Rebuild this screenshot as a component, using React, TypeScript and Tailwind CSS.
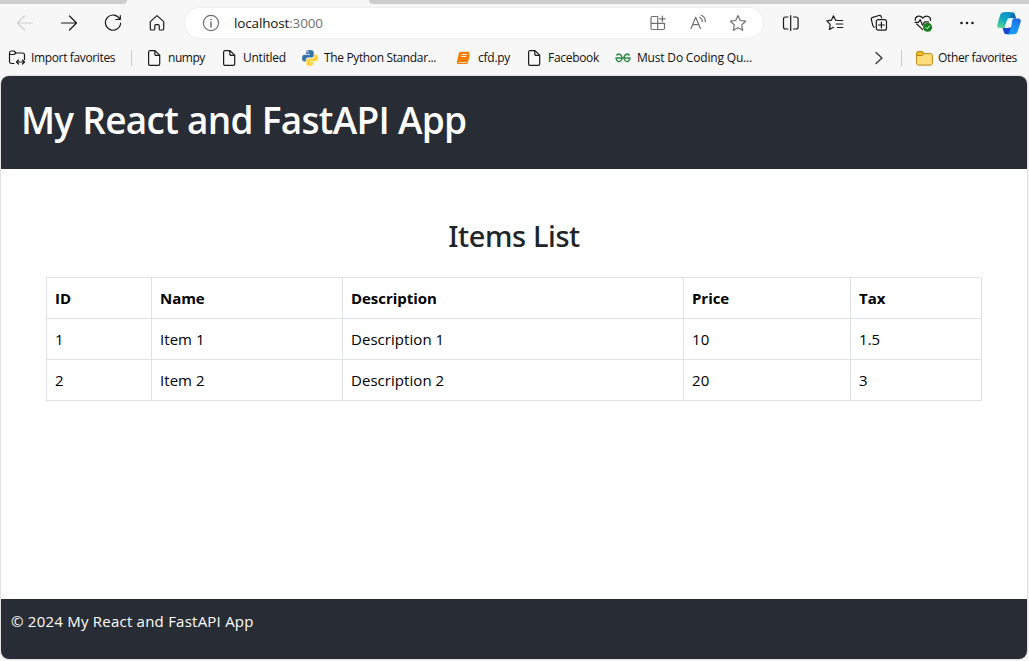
import type { ReactNode } from 'react';

type IconProps = { children: ReactNode; className?: string; size?: number };

function Icon({ children, className = '', size = 20 }: IconProps) {
  return (
    <svg
      width={size}
      height={size}
      viewBox={`0 0 ${size} ${size}`}
      fill="none"
      stroke="currentColor"
      strokeWidth="1.2"
      strokeLinecap="round"
      strokeLinejoin="round"
      className={`shrink-0 ${className}`}
    >
      {children}
    </svg>
  );
}

function ToolButton({ children, label }: { children: ReactNode; label: string }) {
  return (
    <button aria-label={label} className="flex h-[30px] w-11 shrink-0 items-center justify-center">
      {children}
    </button>
  );
}

function PageIcon() {
  return (
    <svg width="14" height="16" viewBox="0 0 14 16" fill="none" stroke="#1b1b1b" strokeWidth="1.2" strokeLinejoin="round" className="shrink-0">
      <path d="M3 .7H8l4.700 4.400v8.800c0 .8-.6 1.400-1.400 1.400H3c-.8 0-1.400-.6-1.400-1.400V2.100C1.600 1.300 2.200.7 3 .7Z" />
      <path d="M7.800.9v3.200c0 .8.5 1.300 1.300 1.300h3.400" />
    </svg>
  );
}

function PythonIcon() {
  return (
    <svg width="16" height="16" viewBox="0 0 16 16" className="shrink-0">
      <path fill="#3775a9" d="M7.900 0C5.500 0 4.200.7 4.200 2.200V4H8v.7H2.500C.9 4.700 0 6 0 8s.8 3.600 2.300 3.600h1.500V9.700c0-1.300 1.100-2.300 2.300-2.300h3.700c1.100 0 1.900-.9 1.900-2V2.200C11.700.8 10.200 0 7.900 0Z" />
      <path fill="#ffd43b" d="M8.200 16c2.300 0 3.600-.7 3.600-2.200V12H8v-.7h5.500c1.600 0 2.500-1.300 2.500-3.300s-.8-3.600-2.300-3.600h-1.300v1.900c0 1.300-1.100 2.300-2.300 2.300H6.400c-1.200 0-2.100.9-2.100 2v3.200c0 1.400 1.500 2.200 3.900 2.200Z" />
      <circle cx="6" cy="2" r=".8" fill="#f6f6f6" />
      <circle cx="10" cy="14" r=".8" fill="#f6f6f6" />
    </svg>
  );
}

function BookIcon() {
  return (
    <svg width="14" height="14" viewBox="0 0 14 14" className="shrink-0">
      <path fill="#f57c00" d="M4.300.8h7.900c.8 0 1.200.6 1 1.300L11.300 9.800c-.2.700-.7 1.100-1.400 1.100H3c-.8 0-.8.9-.1.900h7.600l2.600-8.500c.6.2.9.600.7 1.200l-2 7.200c-.2.800-.8 1.300-1.600 1.300H2.600c-1.300 0-2-.9-1.700-2.100L3 2C3.200 1.200 3.700.8 4.300.8Z" />
      <path stroke="#fff" strokeWidth=".9" d="M5.700 3.500h5M5.200 5.500h5" />
    </svg>
  );
}

function GeeksIcon() {
  return (
    <svg width="16" height="10" viewBox="0 0 16 10" fill="none" stroke="#2f8d46" strokeWidth="1.500" className="shrink-0">
      <path d="M1.500 2.500C2.400 1.200 4 .9 5.300 1.700 7.400 3 7.500 6.500 5.500 8 3.500 9.400 1.200 8.100 1.100 5.100h13.800C14.800 8.100 12.500 9.400 10.500 8c-2-1.500-1.900-5 .2-6.300 1.300-.8 2.900-.5 3.800.8" />
    </svg>
  );
}

function FolderIcon() {
  return (
    <svg width="17" height="15" viewBox="0 0 17 15" fill="none" stroke="#b8860b" className="shrink-0">
      <path fill="#ffdc7c" d="M.6 3v9.200c0 1.100.8 1.900 1.900 1.900h12c1.100 0 1.900-.8 1.900-1.900V4.500c0-1.100-.8-1.900-1.900-1.900H8.200L6.700 1C6.400.7 6.100.6 5.700.6H2.500C1.300.6.6 1.500.6 3Z" />
      <path fill="#f2b928" d="M.6 4.500V2.500C.6 1.400 1.300.6 2.500.6h3.200c.4 0 .7.1 1 .4l1.500 1.600-1.400 1.500c-.3.300-.6.400-1 .4Z" />
    </svg>
  );
}

function CopilotIcon() {
  return (
    <svg width="24" height="23" viewBox="0 0 24 23" className="shrink-0">
      <defs>
        <linearGradient id="copilot-left" x1="9" y1="0" x2="3" y2="16" gradientUnits="userSpaceOnUse">
          <stop stopColor="#0a90cc" />
          <stop offset=".5" stopColor="#16acc0" />
          <stop offset="1" stopColor="#5bd88a" />
        </linearGradient>
        <linearGradient id="copilot-right" x1="20" y1="6" x2="12" y2="22" gradientUnits="userSpaceOnUse">
          <stop stopColor="#1d63dc" />
          <stop offset=".45" stopColor="#198df0" />
          <stop offset="1" stopColor="#17a0fb" />
        </linearGradient>
        <linearGradient id="copilot-top" x1="8" y1="0" x2="19" y2="7" gradientUnits="userSpaceOnUse">
          <stop stopColor="#08a4cf" />
          <stop offset="1" stopColor="#06559f" />
        </linearGradient>
      </defs>
      <path fill="url(#copilot-top)" d="M7 .3h8.200c1.500 0 2.200.8 2.700 2.200l1.300 4.100H10Z" />
      <path fill="#1748c9" d="M5 15.500h9v6.800H9.500c-1.500 0-2.200-.8-2.700-2.200L5.400 15.500Z" />
      <path fill="url(#copilot-left)" d="M7 .3h6.400l-.7 5.900c-1.500.2-2.200 1.200-2.600 2.500L8.500 13c-.6 2-1.600 3-3.500 3H2.500c-2 0-2.800-1.500-2.200-3.500L3 3.500C3.700 1.300 4.800.3 7 .3Z" />
      <path fill="url(#copilot-right)" d="M16.500 6.600h4.700c2 0 3 1.500 2.400 3.500l-2.700 8.700c-.7 2.400-1.900 3.500-4.200 3.500h-6.200c1.300-.4 1.700-1.400 2.200-3l1.200-3.900c.5-1.600 1-5.300 1.200-6.500.2-1.300.6-2 1.400-2.300Z" />
      <path fill="#f4fbff" d="M12.700 6.300h4.600c-1.500.2-2.200 1.200-2.700 2.800l-1.300 4.100c-.5 1.600-1.200 2.500-2.700 2.700H8c.4-.8.5-1.800.8-2.900l1.100-4.200c.5-1.600 1.300-2.500 2.800-2.500Z" />
    </svg>
  );
}

function Bookmark({ icon, children, className }: { icon: ReactNode; children: ReactNode; className: string }) {
  return (
    <div className={`flex h-4 shrink-0 items-center whitespace-nowrap ${className}`}>
      {icon}
      <span>{children}</span>
    </div>
  );
}

function TabStrip() {
  return (
    <div className="flex h-1 justify-between">
      <div className="w-[127px] rounded-br-[5px] bg-[#cdcdcd]" />
      <div className="w-[660px] rounded-bl-[5px] bg-[#cdcdcd]" />
    </div>
  );
}

function Toolbar() {
  return (
    <div className="flex h-[38px] items-center pl-[3px] text-[#1b1b1b]">
      <ToolButton label="Back">
        <Icon className="text-[#cfcfcf]"><path d="M17.500 10h-15M9.500 3 2.500 10l7 7" /></Icon>
      </ToolButton>
      <ToolButton label="Forward">
        <Icon><path d="M2.500 10h15M10.500 3l7 7-7 7" /></Icon>
      </ToolButton>
      <ToolButton label="Reload">
        <Icon><path d="M16.800 6.200A7.600 7.600 0 1 0 17.600 10M17.300 2.500v4h-4.500" /></Icon>
      </ToolButton>
      <ToolButton label="Home">
        <Icon><path d="M3.300 8.600 10 2.600l6.700 6v7.100c0 .8-.5 1.300-1.300 1.300h-2.100c-.7 0-1.100-.4-1.100-1.100v-3.100c0-.7-.4-1.100-1.100-1.100H8.900c-.7 0-1.100.4-1.100 1.100v3.100c0 .7-.4 1.100-1.100 1.100H4.600c-.8 0-1.300-.5-1.300-1.300Z" /></Icon>
      </ToolButton>
      <div className="ml-[6px] flex h-[30px] w-[578px] shrink-0 items-center rounded-full bg-white pr-[5px] pl-4 text-[#707070] shadow-[0_0_3px_rgba(0,0,0,0.08)]">
        <Icon>
          <circle cx="10" cy="10" r="7.600" />
          <path d="M10 9v5" strokeWidth="1.500" />
          <circle cx="10" cy="6.500" r=".5" fill="currentColor" strokeWidth=".6" />
        </Icon>
        <span className="ml-[13px] flex-1 text-[13.500px] tracking-[-0.150px]">
          <span className="text-[#111]">localhost</span>:3000
        </span>
        <div className="flex">
          <div className="flex w-10 justify-center">
            <Icon><path d="M9 3.500H4.200c-.8 0-1.200.4-1.200 1.200v10.600c0 .8.4 1.200 1.200 1.200h11.100c.8 0 1.200-.4 1.200-1.200v-5H3M9.700 3.500v13M14.400 3v5.600M11.600 5.800h5.600" /></Icon>
          </div>
          <div className="flex w-10 justify-center">
            <Icon><path d="M3 15.500 7.700 4.300l4.700 11.200M4.600 11.700h6.200M11.700 4.300c1.700.9 2.600 2.300 2.700 4.300M13.500 2.300c2.500 1.200 3.800 3.300 3.800 6.300" /></Icon>
          </div>
          <div className="flex w-10 justify-center">
            <Icon><path d="m10 2.600 2.300 4.900 5.300.7-3.900 3.700 1 5.400-4.700-2.600-4.700 2.600 1-5.400-3.900-3.700 5.300-.7Z" /></Icon>
          </div>
        </div>
      </div>
      <div className="ml-[6px] flex">
        <ToolButton label="Split screen">
          <Icon><path d="M7 4H4.500C3.300 4 2.500 4.800 2.500 6v8c0 1.200.8 2 2 2H7M12.500 4h2.600c1.200 0 2 .8 2 2v8c0 1.200-.8 2-2 2h-2.600M9.700 2.500v15" /></Icon>
        </ToolButton>
        <ToolButton label="Favorites">
          <Icon><path d="M13 7.500 10.600 7.200 8.500 2.800 6.400 7.200l-4.600.7 3.400 3.400-.8 5.200 4.100-2.200M12.300 7.500h5.500M11.300 11h6.500M12.300 14.500h5.500" /></Icon>
        </ToolButton>
        <ToolButton label="Collections">
          <Icon>
            <path d="M5.500 14.200c-1-.3-1.500-.9-1.700-1.900L2.400 6.800c-.3-1.200.2-2.100 1.400-2.500l6.200-1.800c1.100-.3 2 .2 2.300 1.300l.3 1" />
            <rect x="7.300" y="6.700" width="10.200" height="10.500" rx="2" />
            <path d="M12.400 9v6M9.400 12h6" />
          </Icon>
        </ToolButton>
        <ToolButton label="Browser essentials">
          <Icon>
            <path d="M2.300 7.200C1.700 3.700 6.500 1.200 9.800 5c3.600-3.700 8.300-1.200 7.700 2.500M3.700 11l6 5.600M2 9.300h3.400l1.800-2.600 2.400 5.500 2-3.300h4" />
            <circle cx="14.600" cy="14.300" r="4.500" fill="#16801c" stroke="none" />
            <path d="m12.800 14.400 1.300 1.300 2.400-2.700" stroke="#fff" strokeWidth="1" />
          </Icon>
        </ToolButton>
        <ToolButton label="Settings and more">
          <Icon>
            <g fill="currentColor" stroke="none">
              <circle cx="4.500" cy="10" r="1.300" />
              <circle cx="10" cy="10" r="1.300" />
              <circle cx="15.500" cy="10" r="1.300" />
            </g>
          </Icon>
        </ToolButton>
      </div>
      <div className="ml-2"><CopilotIcon /></div>
    </div>
  );
}

function FavoritesBar() {
  return (
    <div className="flex h-[34px] items-center pb-[2px] pl-2 text-[12px] text-[#111]">
      <Bookmark
        className="w-[123px] gap-[5px] tracking-[-0.360px]"
        icon={
          <svg width="18" height="16" viewBox="0 0 18 16" fill="none" stroke="#1b1b1b" strokeWidth="1.200" strokeLinecap="round" strokeLinejoin="round" className="shrink-0">
            <path d="M6 13.500H3.500c-1.200 0-2-.8-2-2V3c0-1.200.8-2 2-2H6l2 2h6.500c1.200 0 2 .8 2 2v4.500M1.500 4.500H6L8 3M8.500 12h8M10.500 10l-2 2 2 2M14.500 10l2 2-2 2" />
          </svg>
        }
      >
        Import favorites
      </Bookmark>
      <div className="h-4 w-px bg-[#cbcbcb]" />
      <Bookmark className="ml-[15px] w-[75px] gap-[7px] tracking-[-0.450px]" icon={<PageIcon />}>numpy</Bookmark>
      <Bookmark className="w-[80px] gap-[7px] tracking-[-0.250px]" icon={<PageIcon />}>Untitled</Bookmark>
      <Bookmark className="w-[154px] gap-[6px] tracking-[-0.360px]" icon={<PythonIcon />}>The Python Standar...</Bookmark>
      <Bookmark className="w-[71px] gap-[8px] tracking-[-0.250px]" icon={<BookIcon />}>cfd.py</Bookmark>
      <Bookmark className="w-[88px] gap-[7px] tracking-[-0.300px]" icon={<PageIcon />}>Facebook</Bookmark>
      <Bookmark className="w-[150px] gap-[6px] tracking-[-0.180px]" icon={<GeeksIcon />}>Must Do Coding Qu...</Bookmark>
      <div className="ml-auto flex items-center pr-3">
        <svg width="10" height="14" viewBox="0 0 10 14" fill="none" stroke="#333" strokeWidth="1.300" strokeLinecap="round" strokeLinejoin="round">
          <path d="m2 1.500 6 5.500-6 5.500" />
        </svg>
        <div className="ml-[17px] h-4 w-px bg-[#cbcbcb]" />
        <Bookmark className="ml-[14px] w-[101px] gap-[5px] tracking-[-0.360px]" icon={<FolderIcon />}>Other favorites</Bookmark>
      </div>
    </div>
  );
}

const items = [
  { id: 1, name: 'Item 1', description: 'Description 1', price: 10, tax: 1.5 },
  { id: 2, name: 'Item 2', description: 'Description 2', price: 20, tax: 3 },
];

function ItemsTable() {
  const cell = 'border border-[#dee2e6] py-2 pl-2 text-left leading-6';
  return (
    <table className="w-[936px] table-fixed border-collapse text-[15px] text-black">
      <colgroup>
        <col className="w-[105px]" />
        <col className="w-[191px]" />
        <col className="w-[341px]" />
        <col className="w-[167px]" />
        <col className="w-[131px]" />
      </colgroup>
      <thead>
        <tr className="font-bold tracking-[-0.050px]">
          <th className={cell}>ID</th>
          <th className={cell}>Name</th>
          <th className={cell}>Description</th>
          <th className={cell}>Price</th>
          <th className={cell}>Tax</th>
        </tr>
      </thead>
      <tbody className="tracking-[0.050px]">
        {items.map((item) => (
          <tr key={item.id}>
            <td className={cell}>{item.id}</td>
            <td className={cell}>{item.name}</td>
            <td className={cell}>{item.description}</td>
            <td className={cell}>{item.price}</td>
            <td className={cell}>{item.tax}</td>
          </tr>
        ))}
      </tbody>
    </table>
  );
}

export default function App() {
  return (
    <div className="flex h-[661px] w-[1029px] flex-col overflow-hidden bg-[#f7f7f7] font-['Segoe_UI','Open_Sans','Noto_Sans',sans-serif]">
      <TabStrip />
      <Toolbar />
      <FavoritesBar />
      <div className="mx-px mr-[2px] flex h-[583px] flex-col overflow-hidden rounded-lg bg-white shadow-[0_0_2px_rgba(0,0,0,0.3)]">
        <header className="h-[93px] shrink-0 bg-[#282c34] pt-5 pl-5 text-white">
          <h1 className="text-[37px] leading-[48px] font-semibold tracking-[-0.720px] whitespace-nowrap">My React and FastAPI App</h1>
        </header>
        <main className="flex flex-1 flex-col items-center pt-12">
          <h2 className="font-['Noto_Sans',sans-serif] text-[29px] leading-[38px] font-medium tracking-[-0.400px] text-[#212529]">Items List</h2>
          <div className="mt-[22px]"><ItemsTable /></div>
        </main>
        <footer className="h-[60px] shrink-0 bg-[#282c34] pt-[10px] pl-[10px] text-[15px] leading-6 tracking-[0.230px] text-white">
          © 2024 My React and FastAPI App
        </footer>
      </div>
    </div>
  );
}
